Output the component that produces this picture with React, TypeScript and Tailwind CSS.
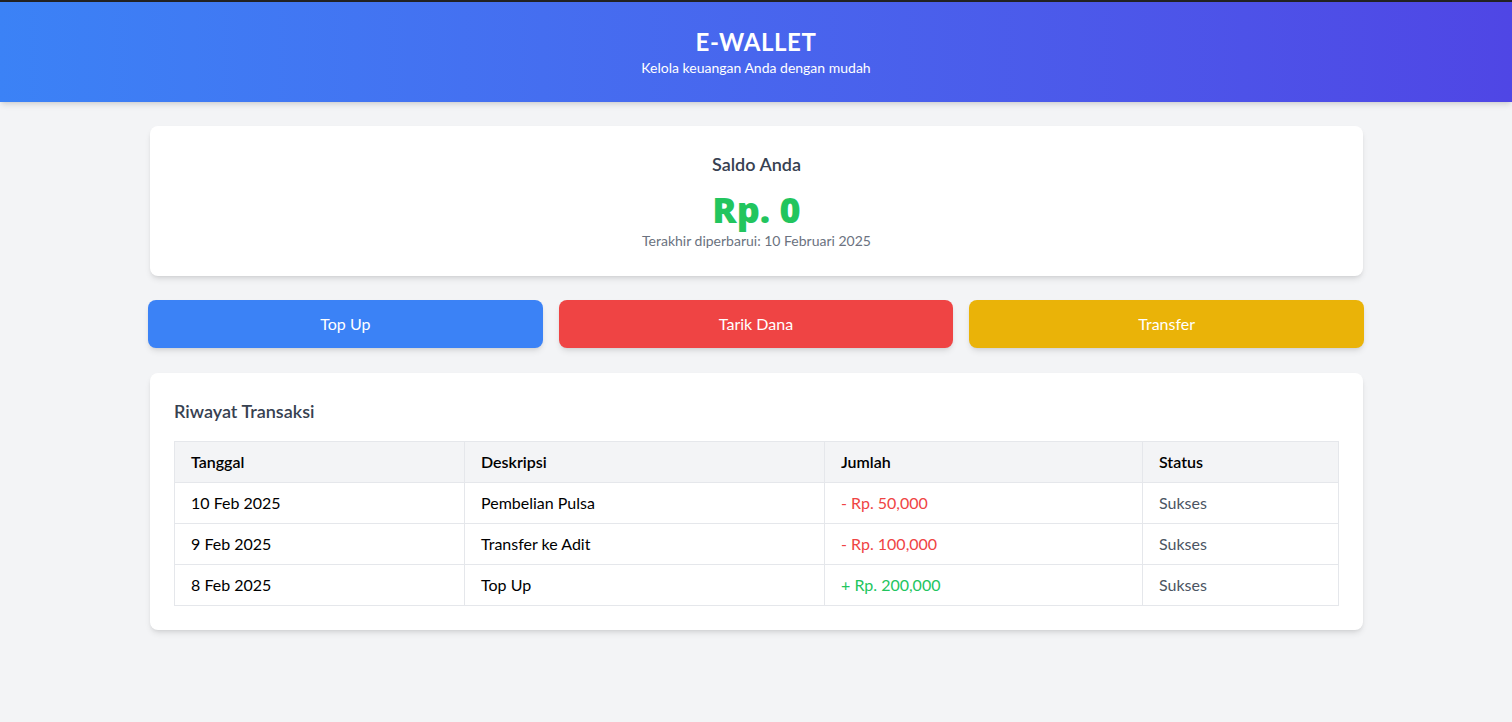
const transactions = [
  { date: '10 Feb 2025', description: 'Pembelian Pulsa', amount: '- Rp. 50,000', credit: false, status: 'Sukses' },
  { date: '9 Feb 2025', description: 'Transfer ke Adit', amount: '- Rp. 100,000', credit: false, status: 'Sukses' },
  { date: '8 Feb 2025', description: 'Top Up', amount: '+ Rp. 200,000', credit: true, status: 'Sukses' },
]

export default function App() {
  return (
    <div className="min-h-screen bg-[#f3f4f6] font-['Lato',sans-serif] text-black">
      <div className="h-[2px] bg-[#222]" />
      <header className="bg-gradient-to-r from-[#3b82f6] to-[#4f46e5] text-white shadow-md">
        <div className="flex h-[100px] flex-col items-center justify-center">
          <h1 className="text-2xl font-bold leading-8 tracking-wide">E-WALLET</h1>
          <p className="text-sm leading-5">Kelola keuangan Anda dengan mudah</p>
        </div>
      </header>

      <main className="mx-auto max-w-screen-xl px-8 py-6">
        {/* Saldo */}
        <section className="ml-[2px] mr-px rounded-lg bg-white px-6 pb-[25px] pt-6 text-center shadow-md">
          <h2 className="text-lg font-semibold leading-7 text-[#374151]">Saldo Anda</h2>
          <p className="mt-3 font-['Open_Sans',sans-serif] text-4xl font-extrabold leading-10 text-[#22c55e]">Rp. 0</p>
          <p className="mt-px text-sm leading-5 text-[#6b7280]">Terakhir diperbarui: 10 Februari 2025</p>
        </section>

        {/* Aksi */}
        <div className="mt-6 grid grid-cols-3 gap-4">
          <button type="button" className="h-12 rounded-lg bg-[#3b82f6] text-base text-white shadow-md">
            Top Up
          </button>
          <button type="button" className="h-12 rounded-lg bg-[#ef4444] text-base text-white shadow-md">
            Tarik Dana
          </button>
          <button type="button" className="h-12 rounded-lg bg-[#eab308] text-base text-white shadow-md">
            Transfer
          </button>
        </div>

        {/* Riwayat */}
        <section className="ml-[2px] mr-px mt-[25px] rounded-lg bg-white p-6 shadow-md">
          <h2 className="mb-4 text-lg font-semibold leading-7 text-[#374151]">Riwayat Transaksi</h2>
          <table className="w-full border-collapse border border-[#e5e7eb] text-left">
            <thead>
              <tr className="bg-[#f3f4f6]">
                <th className="h-[41px] w-[290px] border border-[#e5e7eb] px-4 font-semibold">Tanggal</th>
                <th className="w-[360px] border border-[#e5e7eb] px-4 font-semibold">Deskripsi</th>
                <th className="w-[318px] border border-[#e5e7eb] px-4 font-semibold">Jumlah</th>
                <th className="border border-[#e5e7eb] px-4 font-semibold">Status</th>
              </tr>
            </thead>
            <tbody>
              {transactions.map((t) => (
                <tr key={t.date}>
                  <td className="h-[41px] border border-[#e5e7eb] px-4">{t.date}</td>
                  <td className="border border-[#e5e7eb] px-4">{t.description}</td>
                  <td className={`border border-[#e5e7eb] px-4 ${t.credit ? 'text-[#22c55e]' : 'text-[#ef4444]'}`}>
                    {t.amount}
                  </td>
                  <td className="border border-[#e5e7eb] px-4 text-[#4b5563]">{t.status}</td>
                </tr>
              ))}
            </tbody>
          </table>
        </section>
      </main>
    </div>
  )
}
